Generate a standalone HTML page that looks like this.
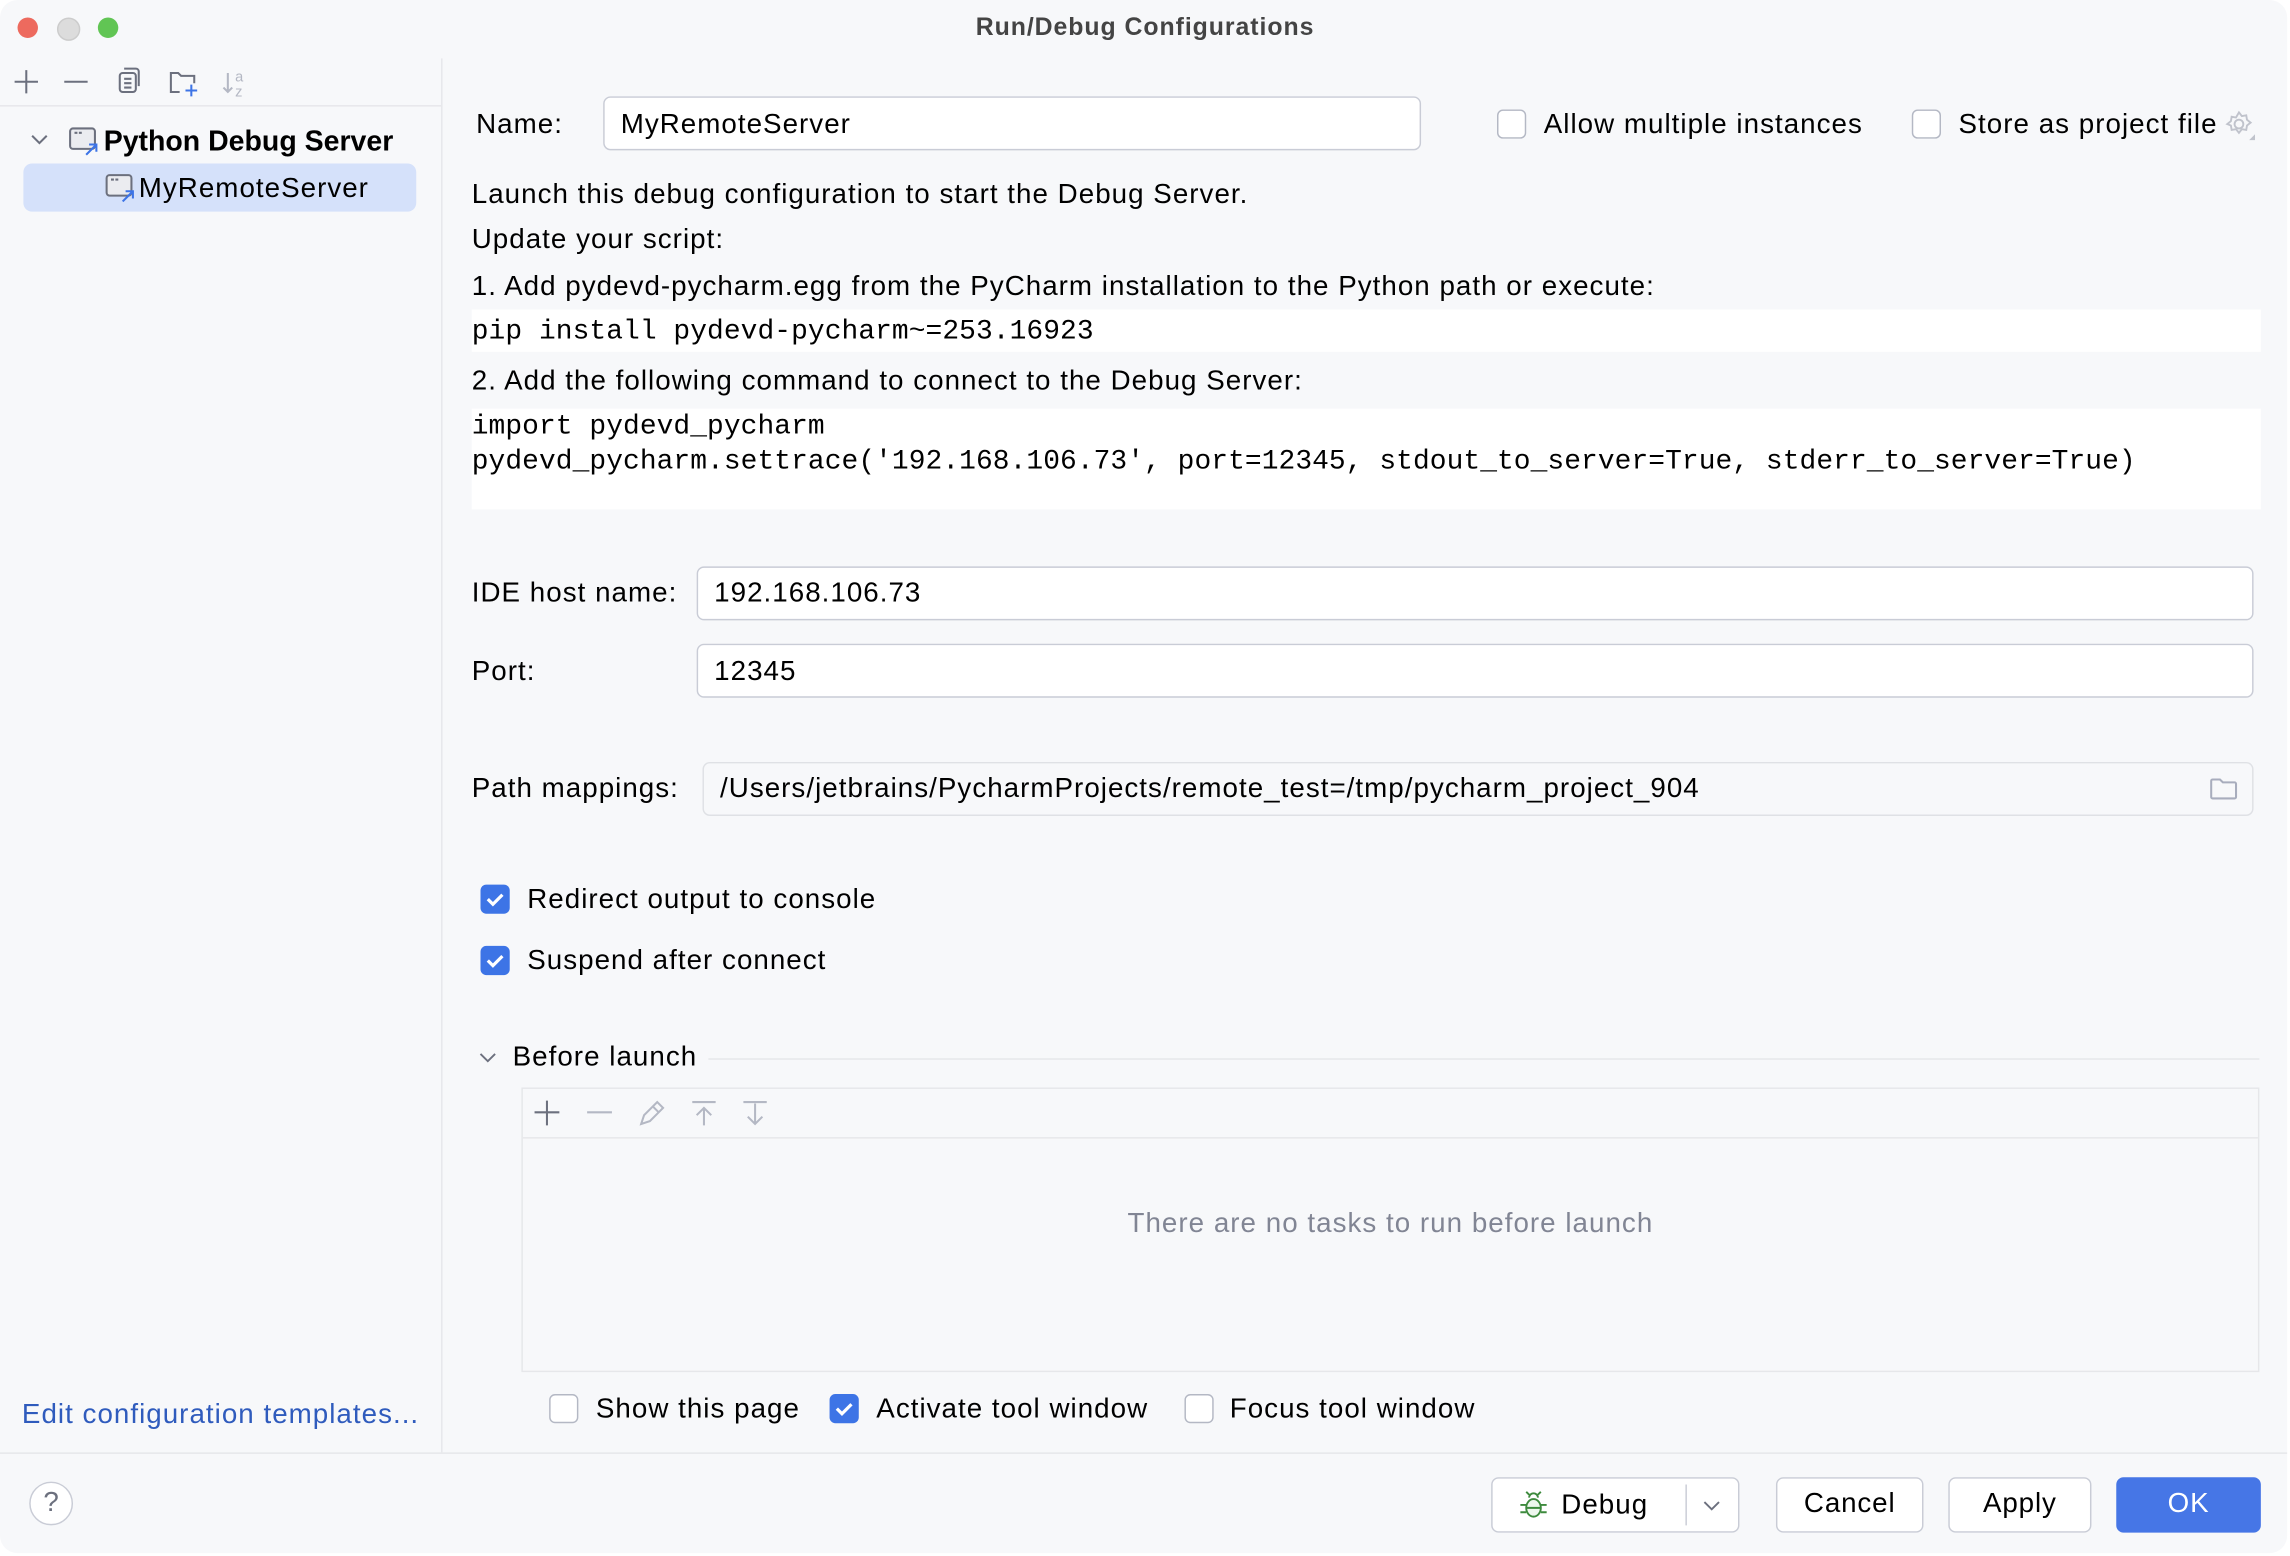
<!DOCTYPE html>
<html><head><meta charset="utf-8"><style>
html,body{margin:0;padding:0;background:#fff;overflow:hidden;width:2290px;height:1556px}
#w{position:absolute;left:0;top:0;width:1568px;height:1066px;transform:scale(1.4605,1.4597);transform-origin:0 0;font-family:"Liberation Sans",sans-serif;color:#000;font-size:19px}
.win{position:absolute;left:0;top:0;width:1566px;height:1064px;background:#f7f8fa;border-radius:12px}
.a{position:absolute;white-space:nowrap;line-height:22px;letter-spacing:0.7px;margin-top:1px}
.box{position:absolute;background:#fff;border:1px solid #c9ccd6;border-radius:5px;box-sizing:border-box}
.mono{font-family:"Liberation Mono",monospace;font-size:19.1px;letter-spacing:0.05px}
.cb{position:absolute;width:20px;height:20px;box-sizing:border-box;border:1.5px solid #b4b8c4;border-radius:4px;background:#fff}
.cb.on{background:#3d74e6;border:none}
.btn{position:absolute;background:#fff;border:1.5px solid #c9ccd6;border-radius:5px;box-sizing:border-box;text-align:center;line-height:36px;letter-spacing:0.6px}
</style></head><body><div id="w"><div class="win">
<div style="position:absolute;left:19px;top:19px;width:14px;height:14px;margin:-7px;border-radius:50%;background:#ed6a5e"></div>
<div style="position:absolute;left:46px;top:19px;width:14px;height:14px;margin:-7px;border-radius:50%;background:#dcdcdc;border:0.5px solid #ccc"></div>
<div style="position:absolute;left:74px;top:19px;width:14px;height:14px;margin:-7px;border-radius:50%;background:#61c554"></div>
<div class="a" style="left:0;width:1568px;text-align:center;top:7px;font-weight:bold;font-size:17px;color:#444;letter-spacing:0.65px">Run/Debug Configurations</div>
<div style="position:absolute;left:302px;top:40px;width:1px;height:955px;background:#e6e7ea"></div>
<div style="position:absolute;left:0;top:72px;width:302px;height:1px;background:#e6e7ea"></div>
<svg style="position:absolute;left:0;top:40px" width="180" height="32" fill="none" stroke-width="1.4">
<path d="M10 16h16M18 8v16" stroke="#6c707e"/><path d="M44 16h16" stroke="#6c707e"/>
<rect x="82" y="10" width="11" height="13" rx="2" stroke="#6c707e"/><path d="M85 7h8a2 2 0 0 1 2 2v10M85 14h5M85 17h5M85 20h5" stroke="#6c707e"/>
<path d="M123 23h-6v-13h5l2 2h9v5" stroke="#6c707e"/><path d="M127 22h8M131 18v8" stroke="#3d74e6"/>
<path d="M156 10v13M153 20l3 3 3-3" stroke="#b4b8c4"/><text x="161" y="16" font-size="10" fill="#b4b8c4" stroke="none" font-family="Liberation Sans">a</text><text x="161" y="26" font-size="10" fill="#b4b8c4" stroke="none" font-family="Liberation Sans">z</text>
</svg>
<svg style="position:absolute;left:20px;top:88px" width="14" height="14"><path d="M2 5l5 5 5-5" stroke="#6c707e" fill="none" stroke-width="1.4"/></svg>
<div style="position:absolute;left:16px;top:112px;width:269px;height:33px;background:#d5e1fa;border-radius:6px"></div>
<svg style="position:absolute;left:46px;top:86px" width="24" height="22" fill="none" stroke-width="1.4"><rect x="2" y="2" width="17" height="14" rx="2" stroke="#6c707e" fill="#ebecf0"/><path d="M5 5h2M8 5h2" stroke="#6c707e"/><path d="M13 20l7-7M15 13h5v5" stroke="#3d74e6"/></svg>
<div class="a" style="left:71px;top:85px;font-weight:bold;font-size:19.5px;letter-spacing:0">Python Debug Server</div>
<svg style="position:absolute;left:71px;top:118px" width="24" height="22" fill="none" stroke-width="1.4"><rect x="2" y="2" width="17" height="14" rx="2" stroke="#6c707e" fill="#ebecf0"/><path d="M5 5h2M8 5h2" stroke="#6c707e"/><path d="M13 20l7-7M15 13h5v5" stroke="#3d74e6"/></svg>
<div class="a" style="left:95px;top:118px">MyRemoteServer</div>
<div class="a" style="left:15px;top:958px;color:#2f5bbd">Edit configuration templates...</div>
<div style="position:absolute;left:0;top:995px;width:1566px;height:1px;background:#e6e7ea"></div>
<div style="position:absolute;left:20px;top:1015px;width:30px;height:30px;box-sizing:border-box;border:1.5px solid #c9ccd6;border-radius:50%;background:#fff;text-align:center;line-height:28px;color:#6c707e;font-size:19px">?</div>
<div class="btn" style="left:1021px;top:1012px;width:170px;height:38px"></div>
<svg style="position:absolute;left:1039px;top:1020px" width="22" height="22" fill="none" stroke="#3d8a3d" stroke-width="1.3"><ellipse cx="11" cy="13" rx="5" ry="6" fill="#eef7ee"/><path d="M8 6a3 3 0 0 1 6 0M6 11H2M6 16H2M16 11h4M16 16h4M6 13h10M8 4l-2-2M14 4l2-2"/></svg>
<div class="a" style="left:1069px;top:1020px">Debug</div>
<div style="position:absolute;left:1154px;top:1017px;width:1px;height:28px;background:#c9ccd6"></div>
<svg style="position:absolute;left:1165px;top:1024px" width="14" height="14"><path d="M2 5l5 5 5-5" stroke="#6c707e" fill="none" stroke-width="1.3"/></svg>
<div class="btn" style="left:1216px;top:1012px;width:101px;height:38px">Cancel</div>
<div class="btn" style="left:1334px;top:1012px;width:98px;height:38px">Apply</div>
<div class="btn" style="left:1449px;top:1012px;width:99px;height:38px;background:#4676e6;border-color:#4676e6;color:#fff">OK</div>

<div class="a" style="left:326px;top:74px">Name:</div>
<div class="box" style="left:413px;top:66px;width:560px;height:37px"></div>
<div class="a" style="left:425px;top:74px">MyRemoteServer</div>
<div class="cb" style="left:1025px;top:75px"></div><div class="a" style="left:1057px;top:74px">Allow multiple instances</div>
<div class="cb" style="left:1309px;top:75px"></div><div class="a" style="left:1341px;top:74px">Store as project file</div>
<svg style="position:absolute;left:1523px;top:75px" width="22" height="22" fill="none" stroke="#c0c3cc" stroke-width="1.3"><circle cx="10" cy="10" r="3"/><path d="M10 2l2 2.5 3-.5 .5 3 2.5 2-2.5 2-.5 3-3-.5-2 2.5-2-2.5-3 .5-.5-3L2 10l2.5-2 .5-3 3 .5z"/><path d="M21 21h-4l4-4z" fill="#c0c3cc" stroke="none"/></svg>

<div class="a" style="left:323px;top:122px">Launch this debug configuration to start the Debug Server.</div>
<div class="a" style="left:323px;top:153px">Update your script:</div>
<div class="a" style="left:323px;top:185px">1. Add pydevd-pycharm.egg from the PyCharm installation to the Python path or execute:</div>
<div style="position:absolute;left:323px;top:212px;width:1225px;height:29px;background:#fff"></div>
<div class="a mono" style="left:323px;top:215px">pip install pydevd-pycharm~=253.16923</div>
<div class="a" style="left:323px;top:250px">2. Add the following command to connect to the Debug Server:</div>
<div style="position:absolute;left:323px;top:280px;width:1225px;height:69px;background:#fff"></div>
<div class="a mono" style="left:323px;top:280px">import pydevd_pycharm</div>
<div class="a mono" style="left:323px;top:304px">pydevd_pycharm.settrace('192.168.106.73', port=12345, stdout_to_server=True, stderr_to_server=True)</div>

<div class="a" style="left:323px;top:395px">IDE host name:</div>
<div class="box" style="left:477px;top:388px;width:1066px;height:37px"></div>
<div class="a" style="left:489px;top:395px">192.168.106.73</div>
<div class="a" style="left:323px;top:449px">Port:</div>
<div class="box" style="left:477px;top:441px;width:1066px;height:37px"></div>
<div class="a" style="left:489px;top:449px">12345</div>
<div class="a" style="left:323px;top:529px">Path mappings:</div>
<div class="box" style="left:481px;top:522px;width:1062px;height:37px;background:#f7f8fa;border-color:#dfe1e5"></div>
<div class="a" style="left:493px;top:529px">/Users/jetbrains/PycharmProjects/remote_test=/tmp/pycharm_project_904</div>
<svg style="position:absolute;left:1512px;top:531px" width="22" height="20" fill="none" stroke="#a8adbd" stroke-width="1.4"><path d="M2 4a1 1 0 0 1 1-1h5l2 2h8a1 1 0 0 1 1 1v9a1 1 0 0 1-1 1H3a1 1 0 0 1-1-1z"/></svg>

<div class="cb on" style="left:329px;top:606px"><svg width="20" height="20"><path d="M5 10l3.5 3.5L15 7" stroke="#fff" stroke-width="2.2" fill="none"/></svg></div>
<div class="a" style="left:361px;top:605px">Redirect output to console</div>
<div class="cb on" style="left:329px;top:648px"><svg width="20" height="20"><path d="M5 10l3.5 3.5L15 7" stroke="#fff" stroke-width="2.2" fill="none"/></svg></div>
<div class="a" style="left:361px;top:647px">Suspend after connect</div>

<svg style="position:absolute;left:327px;top:717px" width="14" height="14"><path d="M2 5l5 5 5-5" stroke="#6c707e" fill="none" stroke-width="1.3"/></svg>
<div class="a" style="left:351px;top:713px">Before launch</div>
<div style="position:absolute;left:485px;top:725px;width:1062px;height:1px;background:#e6e7ea"></div>
<div style="position:absolute;left:357px;top:745px;width:1190px;height:195px;border:1px solid #e6e7ea;box-sizing:border-box;background:#f7f8fa"></div>
<div style="position:absolute;left:358px;top:779px;width:1188px;height:1px;background:#e6e7ea"></div>
<svg style="position:absolute;left:360px;top:750px" width="180" height="26" fill="none" stroke-width="1.4">
<path d="M6 12h17M14.5 4v17" stroke="#6c707e"/><path d="M42 12h17" stroke="#b4b8c4"/>
<path d="M79 20l2-6 9-9 4 4-9 9zM87 8l4 4" stroke="#b4b8c4"/>
<path d="M114 5h16M122 21V9M117 14l5-5 5 5" stroke="#b4b8c4"/>
<path d="M149 5h16M157 6v14M152 15l5 5 5-5" stroke="#b4b8c4"/></svg>
<div class="a" style="left:357px;width:1190px;text-align:center;top:827px;color:#818594">There are no tasks to run before launch</div>

<div class="cb" style="left:376px;top:955px"></div><div class="a" style="left:408px;top:954px">Show this page</div>
<div class="cb on" style="left:568px;top:955px"><svg width="20" height="20"><path d="M5 10l3.5 3.5L15 7" stroke="#fff" stroke-width="2.2" fill="none"/></svg></div><div class="a" style="left:600px;top:954px">Activate tool window</div>
<div class="cb" style="left:811px;top:955px"></div><div class="a" style="left:842px;top:954px">Focus tool window</div>
</div></div></body></html>
